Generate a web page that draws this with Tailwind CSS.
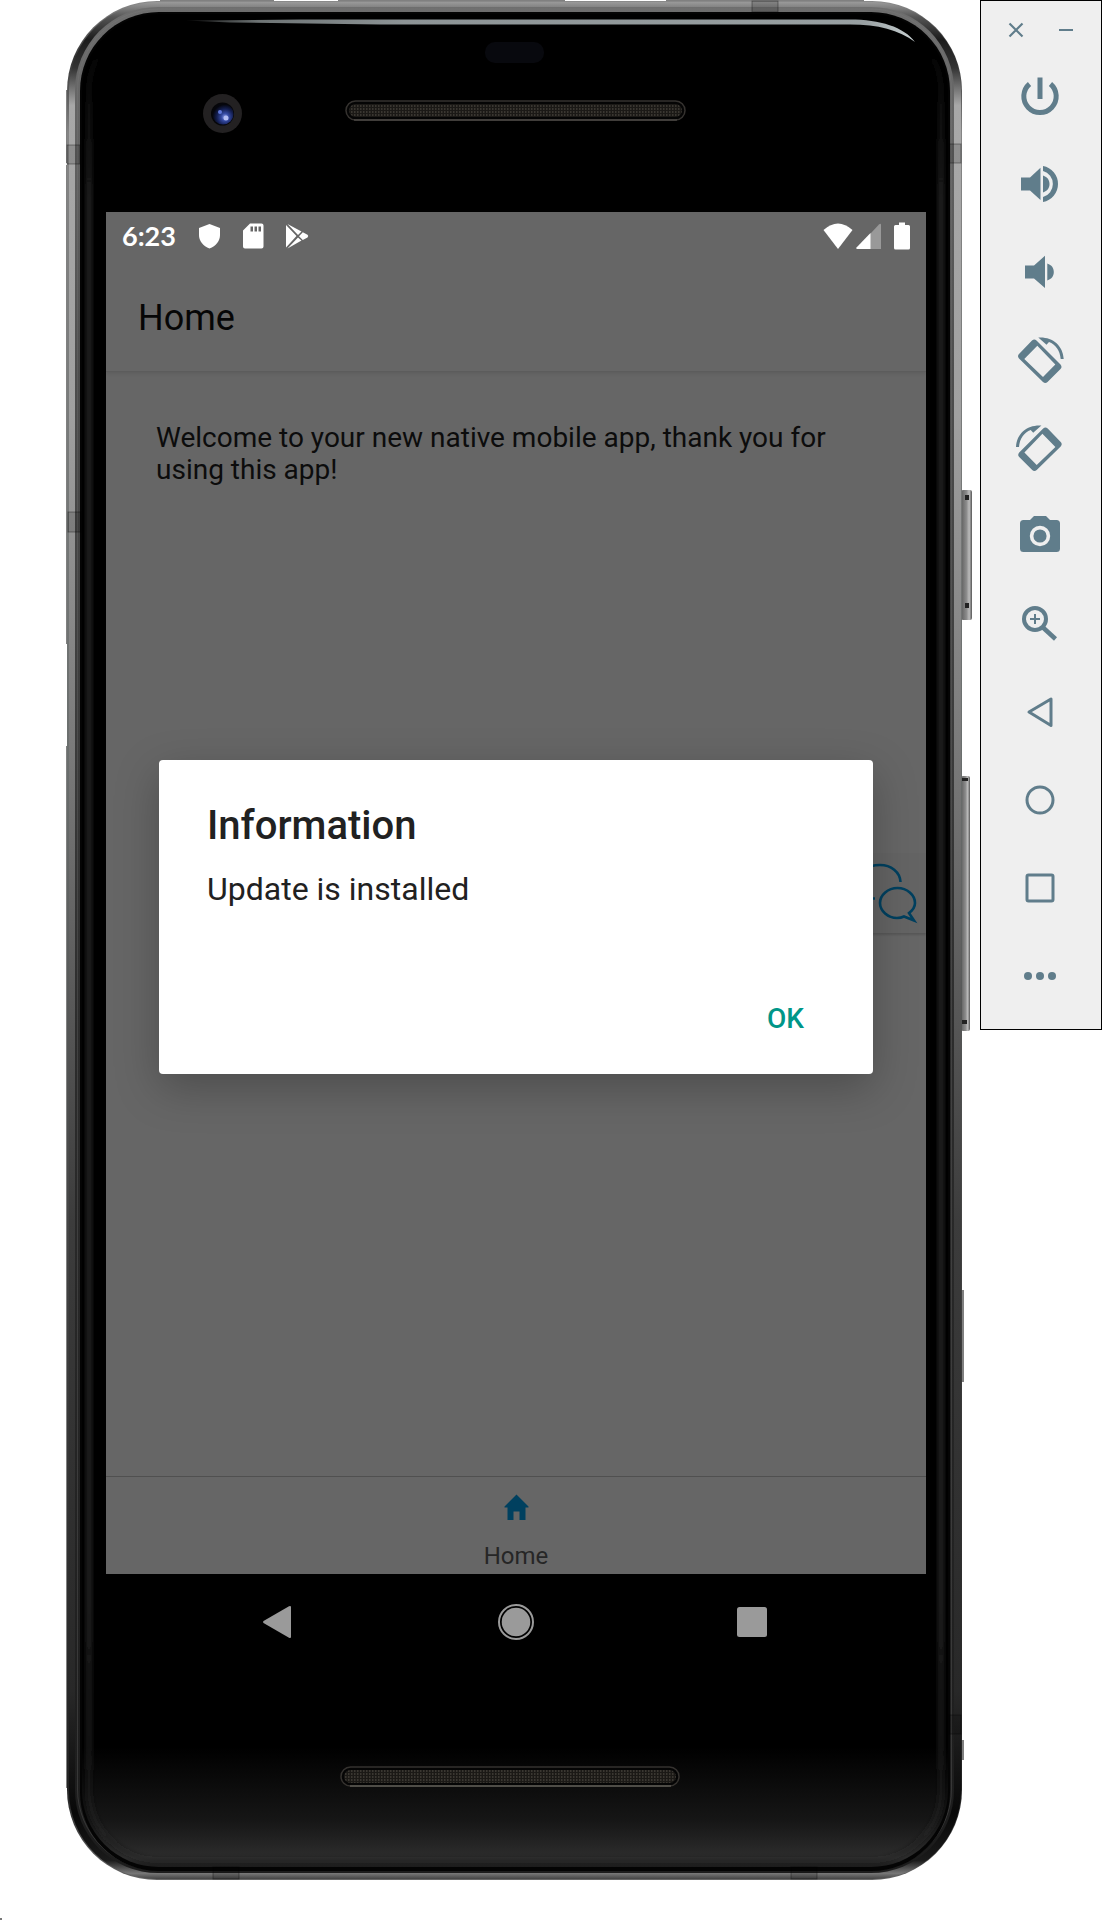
<!DOCTYPE html>
<html lang="en">
<head>
<meta charset="utf-8">
<meta name="viewport" content="width=device-width, initial-scale=1">
<title>Android Emulator</title>
<script src="https://cdn.jsdelivr.net/npm/@tailwindcss/browser@4"></script>
</head>
<body class="bg-white font-['Roboto',sans-serif]">
<main class="relative flex min-h-screen items-start gap-[6px] pl-[66px]">

  <!-- Device -->
  <section aria-label="Device" class="relative min-w-0 flex-1 pt-[212px] pr-[48px] pb-[210px] pl-[40px]">
    <svg class="absolute inset-0 h-full w-full" viewBox="66 0 908 1880" preserveAspectRatio="none" aria-hidden="true">
      <defs>
        <linearGradient id="metal" x1="0" y1="0" x2="0" y2="1">
          <stop offset="0" stop-color="#9a9a9a"/><stop offset=".008" stop-color="#555"/><stop offset=".02" stop-color="#1c1c1c"/><stop offset=".035" stop-color="#333"/><stop offset=".055" stop-color="#a8a8a8"/><stop offset=".22" stop-color="#a0a0a0"/><stop offset=".42" stop-color="#757575"/><stop offset=".65" stop-color="#3c3c3c"/><stop offset=".9" stop-color="#282828"/><stop offset=".965" stop-color="#080808"/><stop offset=".99" stop-color="#1a1a1a"/><stop offset=".997" stop-color="#777"/><stop offset="1" stop-color="#444"/>
        </linearGradient>
        <linearGradient id="edge" x1="0" y1="0" x2="0" y2="1">
          <stop offset="0" stop-color="#8a8a8a"/><stop offset=".03" stop-color="#333"/><stop offset=".07" stop-color="#858585"/><stop offset=".4" stop-color="#6b6f6e"/><stop offset=".65" stop-color="#444"/><stop offset=".95" stop-color="#222"/><stop offset="1" stop-color="#666"/>
        </linearGradient>
        <linearGradient id="ring" x1="0" y1="0" x2="0" y2="1">
          <stop offset="0" stop-color="#6e6e6e"/><stop offset=".2" stop-color="#4d4d4d"/><stop offset=".55" stop-color="#2c2c2c"/><stop offset="1" stop-color="#1c1c1c"/>
        </linearGradient>
        <linearGradient id="glass" x1="0" y1="0" x2="0" y2="1">
          <stop offset="0" stop-color="#000"/><stop offset=".935" stop-color="#000"/><stop offset=".975" stop-color="#161616"/><stop offset=".995" stop-color="#2d2d2d"/><stop offset="1" stop-color="#1c1c1c"/>
        </linearGradient>
        <linearGradient id="stripe" x1="0" y1="0" x2="0" y2="1">
          <stop offset="0" stop-color="#222" stop-opacity="0"/><stop offset=".03" stop-color="#222" stop-opacity=".2"/><stop offset=".1" stop-color="#222"/><stop offset=".85" stop-color="#222"/><stop offset=".95" stop-color="#222" stop-opacity=".6"/><stop offset="1" stop-color="#222" stop-opacity=".3"/>
        </linearGradient>
        <filter id="soft"><feGaussianBlur stdDeviation="2"/></filter>
        <linearGradient id="shine" x1="0" y1="0" x2="1" y2="0">
          <stop offset="0" stop-color="#111"/><stop offset=".1" stop-color="#6e7475"/><stop offset=".3" stop-color="#8d9496"/><stop offset=".93" stop-color="#98a0a2"/><stop offset="1" stop-color="#c8d0d2"/>
        </linearGradient>
        <linearGradient id="key" x1="0" y1="0" x2="1" y2="0">
          <stop offset="0" stop-color="#5f5f5f"/><stop offset=".5" stop-color="#8c8c8c"/><stop offset=".75" stop-color="#bdbdbd"/><stop offset="1" stop-color="#555"/>
        </linearGradient>
        <radialGradient id="lens" cx=".6" cy=".65" r=".6">
          <stop offset="0" stop-color="#8fa0ee"/><stop offset=".3" stop-color="#3449a0"/><stop offset=".65" stop-color="#141f52"/><stop offset="1" stop-color="#05060d"/>
        </radialGradient>
        <pattern id="mesh" width="3" height="3" patternUnits="userSpaceOnUse">
          <rect width="3" height="3" fill="#1b1916"/><rect width="1.500" height="2" fill="#3a3731"/>
        </pattern>
      </defs>

      <!-- Antenna edges and side keys -->
      <path fill="#808080" d="M160 0H274V4H160ZM338 0H565V4H338ZM666 0H864V4H666ZM66 90H70V163H66ZM66 165H70V644H66ZM66 746H68V1788H66ZM960 1290H964V1382H960ZM960 1740H964V1760H960Z"/>
      <rect x="961" y="490" width="11" height="130" rx="2" fill="url(#key)"/>
      <path fill="#222" d="M965 495H969V500H965ZM965 603H969V608H965Z"/>
      <rect x="961" y="776" width="9" height="255" rx="2" fill="url(#key)"/>
      <path fill="#222" d="M962 778H968V781H962ZM962 1020H967V1024H962Z"/>

      <!-- Metal frame and front glass -->
      <rect x="67" y="1" width="895" height="1879" rx="90" fill="url(#edge)"/>
      <rect x="69" y="2" width="892" height="1877" rx="88" fill="url(#metal)"/>
      <rect x="75" y="7" width="879" height="1866" rx="83" fill="url(#ring)"/>
      <rect x="77.500" y="9" width="874" height="1861" rx="81" fill="none" stroke="#858585" stroke-opacity=".25"/>
      <rect x="80" y="12" width="870" height="1859" rx="79" fill="#040404"/>
      <rect x="82" y="14" width="866" height="1853" rx="77" fill="url(#glass)"/>
      <rect x="89" y="21" width="852" height="1839" rx="70" fill="none" stroke="url(#stripe)" stroke-width="6" filter="url(#soft)"/>

      <!-- Antenna bands -->
      <g fill="#000" fill-opacity=".15" stroke="#000" stroke-opacity=".35">
        <rect x="67" y="145" width="13" height="19"/><rect x="68" y="512" width="13" height="20"/>
        <rect x="949" y="144" width="12" height="19"/><rect x="949" y="1715" width="12" height="19"/>
        <rect x="752" y="1" width="26" height="11"/><rect x="213" y="1867" width="26" height="12"/><rect x="791" y="1867" width="26" height="12"/>
      </g>

      <path fill="url(#shine)" d="M186 20.500L300 19.500H850C880 19.500 904 27 915 42C899 30 878 24.500 850 24.500H380L230 22.500Z"/>
      <rect x="485" y="42" width="59" height="21" rx="10" fill="#08090e"/>
      <circle cx="222.500" cy="113.500" r="19.500" fill="#232122"/>
      <circle cx="222.500" cy="114" r="11.500" fill="#060609"/>
      <circle cx="223" cy="114" r="10.500" fill="url(#lens)"/>
      <circle cx="220" cy="112" r="2" fill="#5f76d8"/><circle cx="226" cy="118" r="2.500" fill="#b3bdf3"/>

      <rect x="346" y="101" width="339" height="19" rx="9.500" fill="#050505" stroke="#35322f" stroke-width="1.500"/>
      <rect x="349" y="104" width="333" height="13" rx="6.500" fill="url(#mesh)"/>
      <path d="M354 120H677" stroke="#5a5752"/>
      <rect x="341" y="1767" width="338" height="19" rx="9.500" fill="#050505" stroke="#35322f" stroke-width="1.500"/>
      <rect x="344" y="1770" width="332" height="13" rx="6.500" fill="url(#mesh)"/>
      <path d="M350 1786H671" stroke="#757269"/>
    </svg>

    <!-- Screen -->
    <div class="relative">
      <div class="flex min-h-[1362px] flex-col bg-[#666]">
        <header class="h-[160px] border-b border-[#5c5c5c] shadow-[0_2px_3px_rgba(0,0,0,0.08)]">
          <div class="flex h-[48px] items-center justify-between pr-[16px] pl-4 text-white">
            <div class="flex items-center gap-[21px]">
              <span class="font-['Lato',sans-serif] text-[27px] leading-[32px] font-bold">6:23</span>
              <svg class="h-[26px] w-[24px]" viewBox="0 0 24 26" fill="currentColor" aria-hidden="true"><path d="M12.500 1L23 5V12C23 18 19 23 12.500 25.500C6 23 2 18 2 12V5Z"/></svg>
              <svg class="h-[26px] w-[22px]" viewBox="0 0 22 26" fill="currentColor" aria-hidden="true"><path fill-rule="evenodd" d="M8 0.500H19.500Q21.500 .5 21.500 2.500V23.500Q21.500 25.500 19.500 25.500H3Q1 25.500 1 23.500V7.500ZM8.500 3.500V8.500H11V3.500ZM12.500 3.500V8.500H15V3.500ZM16.500 3.500V8.500H19V3.500Z"/></svg>
              <svg class="h-[26px] w-[24px]" viewBox="0 0 24 26" fill="currentColor" aria-hidden="true"><path d="M1 2L11.500 13L1 24.500ZM2.500 1L16.500 8.500L13 12ZM2.500 25.500L13 14.500L16.500 17.500ZM17.800 9.200L22.500 11.800Q24 13 22.500 14.500L17.800 17L14 13.200Z"/></svg>
            </div>
            <div class="flex items-center">
              <svg class="h-[28px] w-[30px]" viewBox="0 0 30 28" fill="currentColor" aria-hidden="true"><path d="M.5 8Q15-5 29.500 8L15 27Z"/></svg>
              <svg class="mr-[13px] ml-[3px] h-[28px] w-[25px]" viewBox="0 0 25 28" aria-hidden="true"><path fill="#999" d="M0 27L23 2.500Q25 1 25 3V27Z"/><path fill="#fff" d="M1 27Q0 26.500 .5 25.500L14.500 11V27Z"/></svg>
              <svg class="h-[28px] w-[16px]" viewBox="0 0 16 28" fill="currentColor" aria-hidden="true"><path d="M5 .5H11V3H14.500Q16 3 16 4.500V26Q16 27.500 14.500 27.500H1.500Q0 27.500 0 26V4.500Q0 3 1.500 3H5Z"/></svg>
            </div>
          </div>
          <h1 class="px-[32px] pt-[38px] text-[36px] leading-[40px] text-[#060606]">Home</h1>
        </header>

        <div class="relative flex-1 px-[50px] pt-[50px]">
          <p class="text-[28px] leading-[32px] text-[#0c0c0c]">Welcome to your new native mobile app, thank you for using this app!</p>
          <!-- Feedback tab pinned to the screen edge -->
          <button type="button" aria-label="Feedback" class="absolute top-[481px] right-0 flex h-[80px] w-[84px] items-center justify-center bg-[#646464] shadow-[0_2px_2px_rgba(0,0,0,0.15)]">
            <svg class="h-[80px] w-[84px]" viewBox="842 853 84 80" fill="none" stroke="#00405f" stroke-width="2.600" aria-hidden="true">
              <path d="M900.500 882C900 872 891 865 880 865C867 865 857 872 857 882C857 888 860 892 864 895L860 902L870 898.500H875"/>
              <path d="M909 913C913 910 915 907 915 903C915 895 907 888 897.500 888S880 895 880 903S888 918 897 918C900 918 902 917.500 904 916.500L914 920.500Z"/>
            </svg>
          </button>
        </div>

        <nav aria-label="Tabs" class="flex justify-center border-t border-[#505050]">
          <a href="#home" class="flex h-[97px] flex-col items-center gap-[18px] pt-[17px] text-[24px] leading-[32px] text-[#262626]">
            <svg class="h-[28px] w-[28px]" viewBox="0 0 28 28" fill="#00405f" aria-hidden="true"><path d="M14.500 .5L26.500 12.500V13.500H23.500V26H17.500V17.500H11.500V26H5.500V13.500H2.500V12.500Z"/></svg>
            Home
          </a>
        </nav>
      </div>

      <!-- Message dialog -->
      <div role="dialog" aria-labelledby="dialog-title" class="absolute inset-x-[53px] top-[548px] flex min-h-[314px] flex-col rounded-[4px] bg-white px-[48px] pt-[42px] pb-[37px] text-[#212121] shadow-[0_14px_44px_rgba(0,0,0,0.25)]">
        <h2 id="dialog-title" class="text-[40px] leading-[48px] font-medium">Information</h2>
        <p class="mt-[19px] text-[32px] leading-[40px]">Update is installed</p>
        <button type="button" class="mt-auto self-end px-[21px] text-[28px] leading-[36px] font-medium text-[#009688]">OK</button>
      </div>

      <!-- System navigation -->
      <div class="flex h-[96px] items-center justify-center gap-[190px]">
        <button type="button" aria-label="Back" class="flex h-[48px] w-[48px] items-center justify-center"><svg class="h-[48px] w-[48px]" viewBox="0 0 48 48" fill="#9a9a9a" aria-hidden="true"><path d="M9.500 25Q8.500 24 9.500 23L35 8.200Q37 7.500 37 9V39Q37 40.500 35 39.800Z"/></svg></button>
        <button type="button" aria-label="Home" class="flex h-[48px] w-[48px] items-center justify-center"><svg class="h-[48px] w-[48px]" viewBox="0 0 48 48" aria-hidden="true"><circle cx="24" cy="24" r="17" fill="none" stroke="#9a9a9a" stroke-width="2"/><circle cx="24" cy="24" r="14.300" fill="#9a9a9a"/></svg></button>
        <button type="button" aria-label="Overview" class="flex h-[48px] w-[48px] items-center justify-center"><svg class="h-[48px] w-[48px]" viewBox="0 0 48 48" aria-hidden="true"><rect x="7" y="9" width="30" height="30" rx="2.500" fill="#9a9a9a"/></svg></button>
      </div>
    </div>
  </section>

  <!-- Emulator toolbar -->
  <aside aria-label="Emulator controls" class="flex w-[122px] shrink-0 flex-col items-center border border-black bg-[#efefef] pb-[9px] text-[#607d8b]">
    <div class="flex h-[51px] w-full gap-[26px] pt-[17px] pl-[23px]">
      <button type="button" aria-label="Close" class="h-[24px] w-[24px]"><svg class="h-[24px] w-[24px]" viewBox="0 0 24 24" stroke="currentColor" stroke-width="2.200" aria-hidden="true"><path d="M5.500 5.500L18.500 18.500M18.500 5.500L5.500 18.500"/></svg></button>
      <button type="button" aria-label="Minimize" class="h-[24px] w-[24px]"><svg class="h-[24px] w-[24px]" viewBox="0 0 24 24" stroke="currentColor" stroke-width="2" aria-hidden="true"><path d="M5 12H19"/></svg></button>
    </div>
    <button type="button" aria-label="Power" class="flex h-[88px] items-center"><svg class="h-[48px] w-[48px]" viewBox="0 0 48 48" fill="none" stroke="currentColor" stroke-width="5" aria-hidden="true"><path d="M12.500 12A16.200 16.200 0 1 0 33.500 12M23 5.500V27"/></svg></button>
    <button type="button" aria-label="Volume up" class="flex h-[88px] items-center"><svg class="h-[48px] w-[48px]" viewBox="0 0 48 48" fill="currentColor" aria-hidden="true"><path d="M4 17.500H13L23.500 7.700V40L13 30.500H4ZM26 15.500C30.500 17 32.500 20 32.500 24S30.500 31 26 32.500ZM26 6A18.300 18.300 0 0 1 26 42V37A13.500 13.500 0 0 0 26 11Z"/></svg></button>
    <button type="button" aria-label="Volume down" class="flex h-[88px] items-center"><svg class="h-[48px] w-[48px]" viewBox="0 0 48 48" fill="currentColor" aria-hidden="true"><path d="M8 17.500H17L28 7.700V40L17 30.500H8ZM30.300 15.500C34.800 17 36.800 20 36.800 24S34.800 31 30.300 32.500Z"/></svg></button>
    <button type="button" aria-label="Rotate left" class="flex h-[88px] items-center"><svg class="h-[48px] w-[48px] overflow-visible" viewBox="0 0 48 48" fill="currentColor" aria-hidden="true"><path fill-rule="evenodd" d="M15 4.500Q17.300 2.500 19.500 4.500L43.500 28.500Q45.500 31 43.500 33L30.500 46Q28.300 48 26 46L2 22.500Q0 20 2 18ZM20.300 9.700L7.300 23L26 41L38.300 28.500Z"/><path d="M21.300 1.500C35 .5 46 9 46.700 23H43.700C43 14.500 38.500 8.500 32 6L29.500 8.700Z"/></svg></button>
    <button type="button" aria-label="Rotate right" class="flex h-[88px] items-center"><svg class="h-[48px] w-[48px] overflow-visible" viewBox="0 0 48 48" fill="currentColor" aria-hidden="true"><g transform="matrix(-1 0 0 1 45.700 0)"><path fill-rule="evenodd" d="M15 4.500Q17.300 2.500 19.500 4.500L43.500 28.500Q45.500 31 43.500 33L30.500 46Q28.300 48 26 46L2 22.500Q0 20 2 18ZM20.300 9.700L7.300 23L26 41L38.300 28.500Z"/><path d="M21.300 1.500C35 .5 46 9 46.700 23H43.700C43 14.500 38.500 8.500 32 6L29.500 8.700Z"/></g></svg></button>
    <button type="button" aria-label="Take screenshot" class="flex h-[88px] items-center"><svg class="h-[48px] w-[48px]" viewBox="0 0 48 48" aria-hidden="true"><path fill="currentColor" d="M6.500 8H13L17 4H29L33 8H39.500Q43 8 43 11.500V36.500Q43 40 39.500 40H6.500Q3 40 3 36.500V11.500Q3 8 6.500 8Z"/><circle cx="23" cy="24" r="8.400" fill="none" stroke="#efefef" stroke-width="3.600"/></svg></button>
    <button type="button" aria-label="Zoom" class="flex h-[88px] items-center"><svg class="h-[48px] w-[48px]" viewBox="0 0 48 48" fill="none" stroke="currentColor" aria-hidden="true"><circle cx="18" cy="19" r="11" stroke-width="4"/><path stroke-width="2" d="M13 19H23M18 14V24"/><path stroke-width="4.500" d="M26 27.500L38.500 39"/></svg></button>
    <button type="button" aria-label="Back" class="flex h-[88px] items-center"><svg class="h-[48px] w-[48px]" viewBox="0 0 48 48" fill="none" stroke="currentColor" stroke-width="3" stroke-linejoin="round" aria-hidden="true"><path d="M12 24L34 11V37.500Z"/></svg></button>
    <button type="button" aria-label="Home" class="flex h-[88px] items-center"><svg class="h-[48px] w-[48px]" viewBox="0 0 48 48" fill="none" stroke="currentColor" stroke-width="3" aria-hidden="true"><circle cx="23" cy="24" r="13"/></svg></button>
    <button type="button" aria-label="Overview" class="flex h-[88px] items-center"><svg class="h-[48px] w-[48px]" viewBox="0 0 48 48" fill="none" stroke="currentColor" stroke-width="3" aria-hidden="true"><rect x="10" y="11" width="26" height="26" rx="1.500"/></svg></button>
    <button type="button" aria-label="More" class="flex h-[88px] items-center"><svg class="h-[48px] w-[48px]" viewBox="0 0 48 48" fill="currentColor" aria-hidden="true"><circle cx="11" cy="24" r="4"/><circle cx="23" cy="24" r="4"/><circle cx="35" cy="24" r="4"/></svg></button>
  </aside>

  <span class="absolute bottom-0 left-0 h-[2px] w-[2px] bg-[#777]"></span>
</main>
</body>
</html>
